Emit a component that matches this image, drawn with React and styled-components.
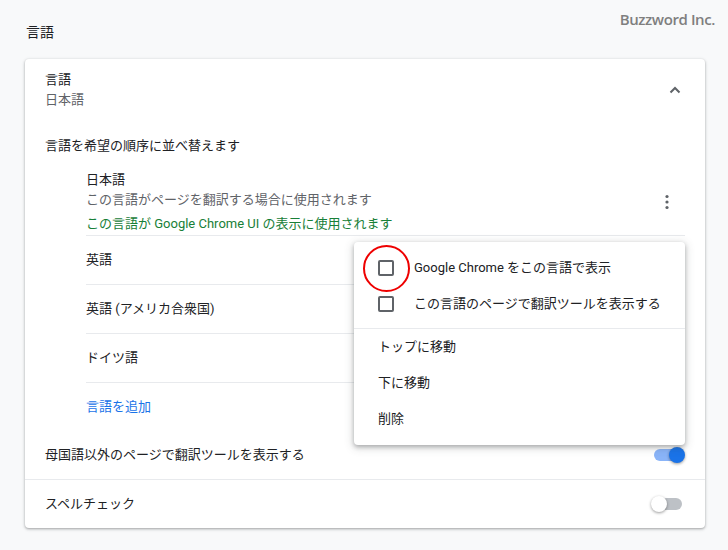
import React from "react";
import styled, { createGlobalStyle } from "styled-components";

const GlobalStyle = createGlobalStyle`
  html, body { margin: 0; padding: 0; }
  body {
    background: #f8f9fa;
    font-family: Roboto, "Noto Sans CJK JP", sans-serif;
    font-size: 13px;
    color: #202124;
  }
`;

const Page = styled.div`
  position: relative;
  width: 728px;
  height: 550px;
  box-sizing: border-box;
  padding: 22px 23px 0 25px;
  overflow: hidden;
`;

const Watermark = styled.div`
  position: absolute;
  top: 9px;
  right: 13px;
  font-family: "Open Sans", "Noto Sans", sans-serif;
  font-size: 15px;
  font-weight: 600;
  letter-spacing: -0.4px;
  line-height: 20px;
  color: #7f7f7f;
`;

const SectionTitle = styled.h2`
  margin: 0 0 17px 1px;
  font-size: 14px;
  font-weight: 400;
  line-height: 20px;
  color: #202124;
`;

const Card = styled.div`
  position: relative;
  width: 680px;
  background: #fff;
  border-radius: 4px;
  box-shadow: 0 1px 2px rgba(60, 64, 67, 0.3), 0 1px 3px 1px rgba(60, 64, 67, 0.15);
`;

const Header = styled.div`
  display: flex;
  align-items: center;
  padding: 11px 20px 12px 20px;
`;

const HeaderText = styled.div`
  flex: 1;
  display: flex;
  flex-direction: column;
`;

const Line = styled.div`
  line-height: 20px;
  color: ${(p) => p.$color || "#202124"};
  margin-top: ${(p) => p.$mt || 0}px;
  white-space: nowrap;
`;

const IconBox = styled.div`
  width: ${(p) => p.$w}px;
  height: ${(p) => p.$h}px;
  display: flex;
  align-items: center;
  justify-content: center;
  flex-shrink: 0;
`;

const Description = styled.div`
  padding: 14px 20px 14px 20px;
  line-height: 20px;
`;

const LangList = styled.div`
  margin: 0 20px 0 61px;
`;

const LangRow = styled.div`
  display: flex;
  align-items: center;
  min-height: 48px;
  padding-bottom: ${(p) => p.$pb || 0}px;
  border-bottom: 1px solid #e8eaed;
`;

const LangText = styled.div`
  flex: 1;
  display: flex;
  flex-direction: column;
`;

const AddLink = styled.div`
  color: #1a73e8;
  line-height: 20px;
  height: 48px;
  display: flex;
  align-items: center;
`;

const ToggleRow = styled.div`
  display: flex;
  align-items: center;
  height: 48px;
  padding: 0 20px 0 20px;
  border-top: ${(p) => (p.$borderTop ? "1px solid #e8eaed" : "none")};
`;

const ToggleLabel = styled.div`
  flex: 1;
  line-height: 20px;
`;

const ToggleWrap = styled.div`
  position: relative;
  width: 34px;
  height: 16px;
  flex-shrink: 0;
`;

const Track = styled.div`
  position: absolute;
  left: 3px;
  top: 2px;
  width: 28px;
  height: 12px;
  border-radius: 6px;
  background: ${(p) => (p.$on ? "#8ab4f8" : "#bdc1c6")};
`;

const Knob = styled.div`
  position: absolute;
  top: 0;
  left: ${(p) => (p.$on ? 18 : 0)}px;
  width: 16px;
  height: 16px;
  border-radius: 50%;
  background: ${(p) => (p.$on ? "#1a73e8" : "#ffffff")};
  box-shadow: 0 1px 3px rgba(0, 0, 0, 0.4);
`;

const Menu = styled.div`
  position: absolute;
  left: 329px;
  top: 183px;
  width: 331px;
  padding: 8px 0;
  background: #fff;
  border-radius: 4px;
  box-shadow: 0 2px 4px rgba(60, 64, 67, 0.35), 0 2px 8px 2px rgba(60, 64, 67, 0.15);
`;

const MenuItem = styled.div`
  position: relative;
  display: flex;
  align-items: center;
  height: 36px;
  padding: 0 24px;
  line-height: 20px;
  color: #202124;
  white-space: nowrap;
`;

const Checkbox = styled.div`
  width: 12px;
  height: 12px;
  border: 2px solid #5f6368;
  border-radius: 2px;
  margin-right: 20px;
  flex-shrink: 0;
`;

const MenuSeparator = styled.div`
  height: 1px;
  background: #e8eaed;
  margin-top: 6px;
`;

const Highlight = styled.div`
  position: absolute;
  left: 9px;
  top: -5px;
  width: 43px;
  height: 43px;
  border: 2px solid #ee0000;
  border-radius: 50%;
  pointer-events: none;
`;

const Toggle = ({ on }) => (
  <ToggleWrap>
    <Track $on={on} />
    <Knob $on={on} />
  </ToggleWrap>
);

export default function App() {
  return (
    <>
      <GlobalStyle />
      <Page>
        <Watermark>Buzzword Inc.</Watermark>
        <SectionTitle>言語</SectionTitle>
        <Card>
          <Header>
            <HeaderText>
              <Line>言語</Line>
              <Line $color="#5f6368">日本語</Line>
            </HeaderText>
            <IconBox $w={20} $h={20}>
              <svg width="12" height="8" viewBox="0 0 12 8">
                <path d="M1.5 6.5 L6 2 L10.5 6.5" fill="none" stroke="#5f6368" strokeWidth="2" />
              </svg>
            </IconBox>
          </Header>
          <Description>言語を希望の順序に並べ替えます</Description>
          <LangList>
            <LangRow $pb={1}>
              <LangText>
                <Line>日本語</Line>
                <Line $color="#5f6368">この言語がページを翻訳する場合に使用されます</Line>
                <Line $color="#188038" $mt={4}>この言語が Google Chrome UI の表示に使用されます</Line>
              </LangText>
              <IconBox $w={36} $h={36}>
                <svg width="4" height="16" viewBox="0 0 4 16">
                  <circle cx="2" cy="2.5" r="1.6" fill="#5f6368" />
                  <circle cx="2" cy="8" r="1.6" fill="#5f6368" />
                  <circle cx="2" cy="13.5" r="1.6" fill="#5f6368" />
                </svg>
              </IconBox>
            </LangRow>
            <LangRow>
              <LangText><Line>英語</Line></LangText>
            </LangRow>
            <LangRow>
              <LangText><Line>英語 (アメリカ合衆国)</Line></LangText>
            </LangRow>
            <LangRow>
              <LangText><Line>ドイツ語</Line></LangText>
            </LangRow>
            <AddLink>言語を追加</AddLink>
          </LangList>
          <ToggleRow>
            <ToggleLabel>母国語以外のページで翻訳ツールを表示する</ToggleLabel>
            <Toggle on />
          </ToggleRow>
          <ToggleRow $borderTop>
            <ToggleLabel>スペルチェック</ToggleLabel>
            <Toggle />
          </ToggleRow>
          <Menu>
            <MenuItem>
              <Highlight />
              <Checkbox />
              Google Chrome をこの言語で表示
            </MenuItem>
            <MenuItem>
              <Checkbox />
              この言語のページで翻訳ツールを表示する
            </MenuItem>
            <MenuSeparator />
            <MenuItem>トップに移動</MenuItem>
            <MenuItem>下に移動</MenuItem>
            <MenuItem>削除</MenuItem>
          </Menu>
        </Card>
      </Page>
    </>
  );
}
